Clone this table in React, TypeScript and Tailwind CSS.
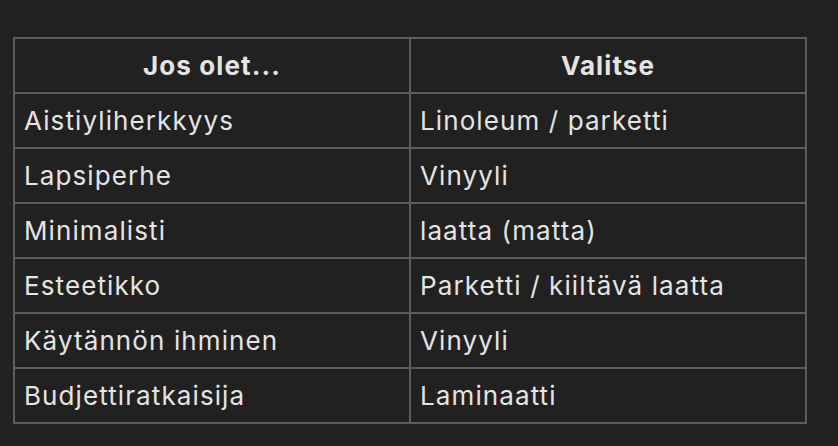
const rows: [string, string][] = [
  ["Aistiyliherkkyys", "Linoleum / parketti"],
  ["Lapsiperhe", "Vinyyli"],
  ["Minimalisti", "laatta (matta)"],
  ["Esteetikko", "Parketti / kiiltävä laatta"],
  ["Käytännön ihminen", "Vinyyli"],
  ["Budjettiratkaisija", "Laminaatti"],
];

export default function App() {
  return (
    <div className="min-h-[446px] w-full bg-[#212121] pl-[13px] pt-[37px] font-['Inter',sans-serif] text-[#e4e4e4]">
      <table className="w-[794px] table-fixed border-collapse border-2 border-[#5c5c5c] text-[26px] tracking-[1.1px]">
        <thead>
          <tr className="h-[55px]">
            <th className="border-2 border-[#5c5c5c] px-[10px] text-center font-bold">Jos olet...</th>
            <th className="border-2 border-[#5c5c5c] px-[10px] text-center font-bold">Valitse</th>
          </tr>
        </thead>
        <tbody>
          {rows.map(([a, b]) => (
            <tr key={a} className="h-[55px]">
              <td className="border-2 border-[#5c5c5c] px-[9px]">{a}</td>
              <td className="border-2 border-[#5c5c5c] px-[9px]">{b}</td>
            </tr>
          ))}
        </tbody>
      </table>
    </div>
  );
}
